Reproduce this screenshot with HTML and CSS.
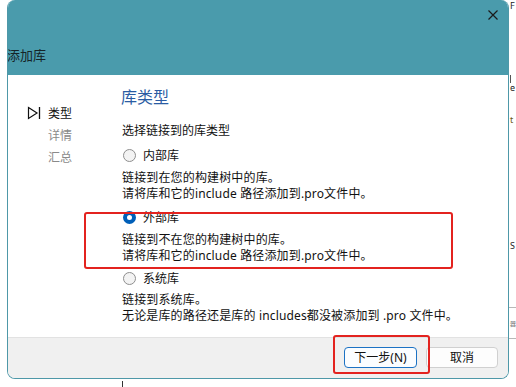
FILE: index.html
```html
<!DOCTYPE html>
<html lang="zh-CN">
<head>
    <meta charset="UTF-8">
    <meta name="viewport" content="width=device-width, initial-scale=1.0">
    <title>添加库</title>
    <link rel="stylesheet" href="styles.css">
</head>
<body>
    <div class="screen">

        <div class="dialog">
            <div class="titlebar">
                <svg class="close" width="10" height="10" viewBox="0 0 10 10">
                    <path d="M0.5 0.5 L9.5 9.5 M9.5 0.5 L0.5 9.5" stroke="#1b1b1b" stroke-width="1.2" fill="none"/>
                </svg>
                <div class="title">添加库</div>
            </div>

            <div class="body">
                <div class="nav">
                    <div class="nav-item active">
                        <svg class="arrow" width="14" height="14" viewBox="0 0 14 14">
                            <path d="M1.5 1.5 L10 7 L1.5 12.5 Z" stroke="#111" stroke-width="1.2" fill="none"/>
                            <path d="M12.5 1 L12.5 13" stroke="#111" stroke-width="1.3"/>
                        </svg>
                        <span>类型</span>
                    </div>
                    <div class="nav-item"><span class="spacer"></span><span>详情</span></div>
                    <div class="nav-item"><span class="spacer"></span><span>汇总</span></div>
                </div>

                <div class="content">
                    <div class="heading">库类型</div>
                    <div class="subtitle">选择链接到的库类型</div>

                    <div class="radio-row first">
                        <span class="radio"></span>
                        <span>内部库</span>
                    </div>
                    <div class="desc">
                        链接到在您的构建树中的库。<br>
                        请将库和它的include 路径添加到.pro文件中。
                    </div>

                    <div class="radio-row">
                        <span class="radio checked"></span>
                        <span>外部库</span>
                    </div>
                    <div class="desc">
                        链接到不在您的构建树中的库。<br>
                        请将库和它的include 路径添加到.pro文件中。
                    </div>

                    <div class="radio-row last">
                        <span class="radio"></span>
                        <span>系统库</span>
                    </div>
                    <div class="desc last">
                        链接到系统库。<br>
                        无论是库的路径还是库的 includes都没被添加到 .pro 文件中。
                    </div>
                </div>
            </div>

            <div class="footer">
                <button class="btn default">下一步(N)</button>
                <button class="btn">取消</button>
            </div>
        </div>

        <!-- bits of the window behind the dialog -->
        <div class="behind">
            <span class="frag f1">F</span>
            <span class="frag f2">e</span>
            <span class="frag f3">t</span>
            <span class="frag f4">S</span>
            <span class="frag f5">器</span>
            <span class="hline h1"></span>
            <span class="hline h2"></span>
            <span class="vline v1"></span>
            <span class="vline v2"></span>
        </div>

        <!-- red annotation boxes -->
        <div class="mark mark-radio"></div>
        <div class="mark mark-btn"></div>
    </div>
</body>
</html>
```

FILE: styles.css
```css
body{
    margin: 0;
    background: #ffffff;
    font-family: "Noto Sans", "Noto Sans CJK SC", sans-serif;
    font-size: 12px;
    color: #111;
}
.screen{
    position: relative;
    width: 516px;
    height: 387px;
    overflow: hidden;
}
.dialog{
    display: flex;
    flex-direction: column;
    margin-left: 7px;
    width: 502px;
    height: 379px;
    box-sizing: border-box;
    border: 1px solid #4e98a8;
    border-top: none;
    border-radius: 8px;
    overflow: hidden;
    background: #fff;
}
.titlebar{
    position: relative;
    height: 75px;
    background: #4a9bac;
    display: flex;
    align-items: flex-end;
}
.close{
    position: absolute;
    top: 10px;
    right: 10px;
}
.title{
    margin-left: -1px;
    margin-bottom: 12px;
    font-size: 13px;
    line-height: 16px;
    color: #152428;
}
.body{
    flex: 1;
    display: flex;
}
/* LEFT NAV */
.nav{
    width: 114px;
    padding-top: 27px;
    padding-left: 19px;
    box-sizing: border-box;
}
.nav-item{
    display: flex;
    align-items: center;
    height: 22px;
    color: #8a8a8a;
}
.nav-item.active{
    color: #111;
}
.arrow{
    margin-right: 7px;
}
.spacer{
    display: inline-block;
    width: 21px;
}
/* CONTENT */
.content{
    display: flex;
    flex-direction: column;
}
.heading{
    margin-top: 12px;
    margin-left: -1px;
    font-size: 16px;
    line-height: 20px;
    color: #2a5ca3;
}
.subtitle{
    margin-top: 16px;
    line-height: 16px;
}
.radio-row{
    display: flex;
    align-items: center;
    height: 16px;
    margin-top: 7px;
}
.radio-row.first{
    margin-top: 8px;
}
.radio-row.last{
    margin-top: 6px;
}
.radio{
    display: inline-block;
    width: 13px;
    height: 13px;
    box-sizing: border-box;
    border-radius: 50%;
    border: 1px solid #8e8e8e;
    background: #f3f3f3;
    margin-left: 1px;
    margin-right: 7px;
}
.radio.checked{
    border: 4px solid #005fb8;
    background: #fff;
}
.desc{
    margin-top: 7px;
    line-height: 16px;
    letter-spacing: 0.15px;
    white-space: nowrap;
}
.desc.last{
    margin-top: 6px;
}
/* FOOTER */
.footer{
    height: 41px;
    box-sizing: border-box;
    background: #f0f0f0;
    border-top: 1px solid #e2e2e2;
    display: flex;
    justify-content: flex-end;
    align-items: flex-start;
    padding-top: 9px;
    padding-right: 10px;
    gap: 9px;
}
.btn{
    height: 21px;
    width: 72px;
    padding: 0;
    font-family: "Noto Sans", "Noto Sans CJK SC", sans-serif;
    font-size: 12px;
    line-height: 19px;
    color: #111;
    background: #fdfdfd;
    border: 1px solid #d0d0d0;
    border-radius: 4px;
}
.btn.default{
    width: 73px;
    border-color: #1c72c4;
    background: #fbfdff;
}
/* BACKGROUND WINDOW */
.frag{
    position: absolute;
    left: 510px;
    font-size: 9px;
    line-height: 10px;
    color: #222;
}
.f1{ top: 1px; }
.f2{ top: 83px; }
.f3{ top: 115px; color: #6b5a12; }
.f4{ top: 241px; }
.f5{ top: 319px; font-size: 6px; color: #777; }
.hline{
    position: absolute;
    left: 509px;
    width: 7px;
    height: 1px;
    background: #b8b8b8;
}
.h1{ top: 307px; }
.h2{ top: 338px; }
.vline{
    position: absolute;
    width: 1px;
    background: #333;
}
.v1{ left: 122px; top: 381px; height: 6px; }
.v2{ left: 510px; top: 75px; height: 8px; background: #555; }
/* RED ANNOTATIONS */
.mark{
    position: absolute;
    border: 2px solid #e3231f;
    border-radius: 3px;
}
.mark-radio{
    left: 84px;
    top: 212px;
    width: 365px;
    height: 53px;
}
.mark-btn{
    left: 333px;
    top: 335px;
    width: 93px;
    height: 35px;
}
```
